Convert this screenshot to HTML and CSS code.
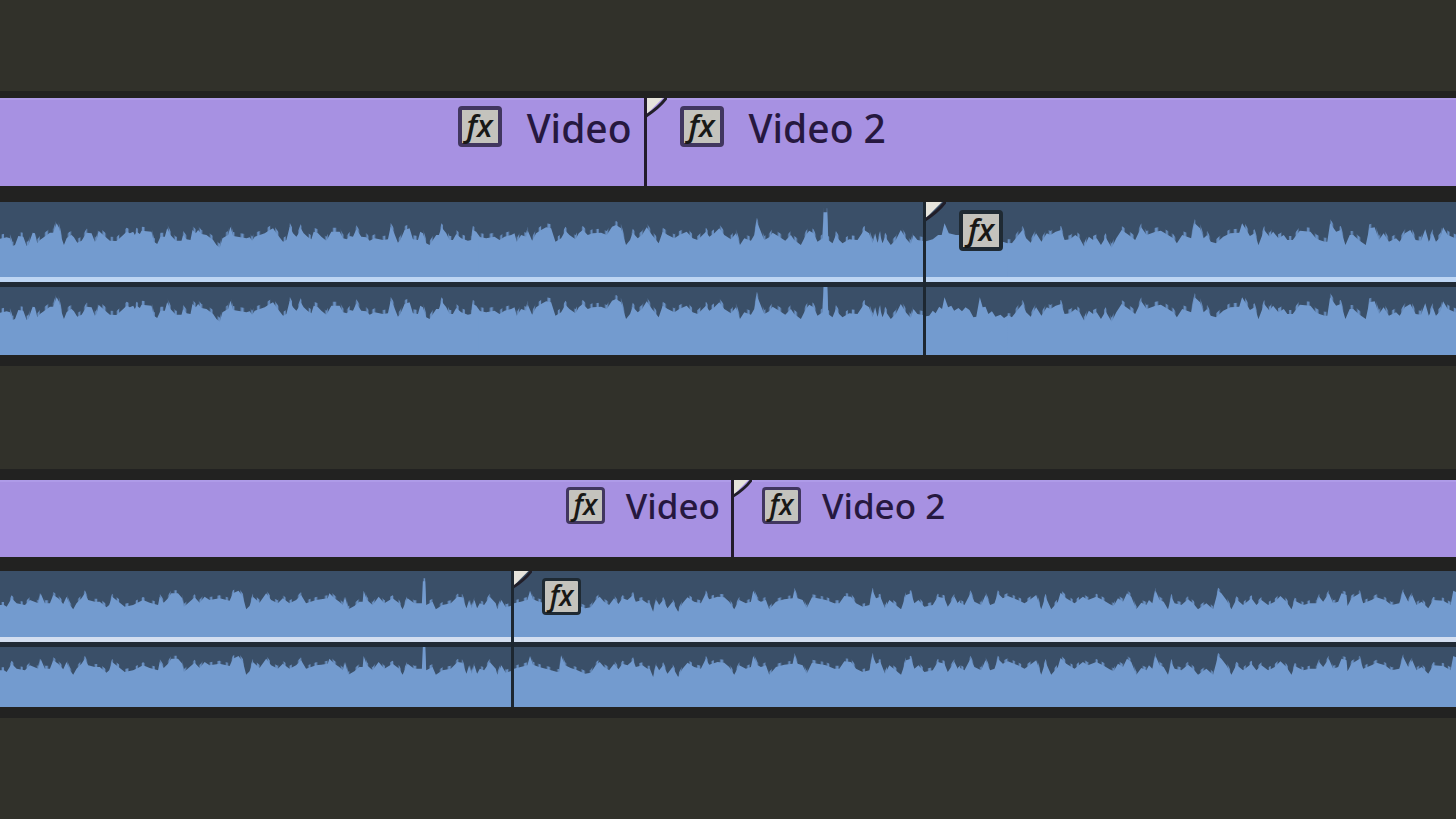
FILE: index.html
```html
<!DOCTYPE html>
<html lang="en">
<head>
<meta charset="utf-8">
<meta name="viewport" content="width=device-width, initial-scale=1">
<title>Timeline</title>
<link rel="stylesheet" href="styles.css">
</head>
<body>
<svg class="defs" aria-hidden="true">
  <defs>
    <pattern id="teeth" width="173" height="600" patternUnits="userSpaceOnUse">
      <path class="tooth" d="M5 0h7v600h-7zM31 0h9v600h-9zM62 0h6v600h-6zM80 0h8v600h-8zM112 0h7v600h-7zM135 0h9v600h-9zM160 0h6v600h-6z"/>
    </pattern>
    <g id="wave-a">
      <path d="M-20,400L-20,180 20,172 30,175 38,198 45,195 55,168 70,170 80,198 85,195 98,158 105,160 112,190 120,180 150,158 160,158 170,130 178,145 185,175 192,195 200,175 208,168 215,165 222,172 232,188 245,182 260,158 275,160 285,185 290,180 296,152 310,165 330,182 350,183 370,165 380,155 390,160 400,155 405,165 410,155 420,162 425,152 455,155 462,185 472,192 482,170 495,170 502,145 512,165 528,182 545,182 550,165 560,178 572,180 578,150 588,160 595,150 605,162 620,165 640,180 650,195 660,203 668,175 685,165 692,140 700,168 740,175 750,172 757,182 765,170 780,165 795,160 810,150 820,145 830,160 850,185 860,180 870,140 880,160 890,170 897,160 903,145 912,160 925,172 935,178 942,155 955,160 965,170 980,182 995,155 1020,155 1030,175 1042,178 1050,168 1060,170 1070,148 1085,170 1100,172 1110,182 1125,175 1150,180 1165,178 1173,140 1182,155 1195,188 1202,180 1215,150 1230,145 1240,178 1255,180 1262,155 1270,160 1280,190 1290,195 1310,165 1318,165 1326,142 1340,160 1350,180 1360,180 1370,162 1385,175 1405,182 1415,180 1420,150 1430,155 1442,172 1442,400Z"/>
      <path transform="translate(1440)" d="M-4,400L-4,170 20,175 45,170 60,180 75,170 95,165 105,160 112,185 125,165 140,170 145,152 158,182 170,160 185,150 200,142 215,145 228,185 245,175 258,152 270,165 288,178 298,160 310,150 325,165 340,160 365,158 382,165 398,140 410,135 425,145 440,195 452,180 460,158 475,175 488,165 502,142 518,165 538,190 550,155 565,165 585,175 600,165 622,155 640,175 655,180 670,165 680,155 690,170 705,160 720,145 735,165 755,178 770,160 782,195 795,175 815,182 825,165 833,125 843,150 855,180 870,172 880,158 900,170 918,182 935,165 945,180 965,195 980,165 990,152 1003,160 1015,185 1030,175 1033,97 1044,97 1047,180 1060,190 1070,165 1080,180 1090,190 1110,178 1135,180 1155,150 1170,160 1180,190 1188,160 1195,188 1203,165 1210,190 1218,170 1235,195 1250,180 1265,150 1280,175 1295,192 1303,165 1315,180 1346,185 1346,400Z"/>
    </g>
    <path id="wave-b-start" d="M60,400L60,190 100,178 115,165 125,165 133,130 145,160 165,165 185,165 215,190 222,188 232,170 260,175 280,180 310,190 322,190 322,400Z"/>
    <path id="wave-b-start-low" d="M60,400L60,190 90,185 100,170 108,178 118,158 126,165 133,130 143,160 152,155 160,170 172,162 182,172 192,160 203,168 214,190 222,188 232,130 240,160 248,158 256,180 266,172 276,188 290,182 300,192 312,184 322,190 322,400Z"/>
    <path id="wave-b" d="M308,400L310,190 322,190 340,165 352,150 362,175 375,188 390,160 405,185 420,160 430,165 445,155 460,150 470,180 485,178 500,165 512,175 525,200 538,170 550,180 560,175 572,195 585,172 602,203 615,175 630,150 650,165 668,180 685,142 700,165 725,155 740,152 760,165 775,175 785,190 800,165 825,175 835,130 850,145 860,175 870,165 880,185 895,190 915,170 935,160 960,158 968,130 980,150 990,168 1003,160 1014,195 1030,150 1045,170 1055,155 1070,175 1085,165 1095,180 1110,180 1130,152 1160,155 1175,175 1185,180 1200,185 1207,185 1215,130 1232,155 1245,150 1258,195 1270,165 1280,165 1295,180 1315,195 1325,145 1340,142 1352,180 1365,160 1380,185 1400,175 1410,185 1425,160 1440,150 1455,180 1470,182 1482,148 1492,185 1503,160 1512,185 1525,170 1532,142 1545,165 1588,185 1588,400Z"/>
    <path id="wave-c" d="M-20,400L-20,165 12,165 20,170 35,145 50,160 75,165 90,150 115,160 122,130 135,160 150,160 160,135 175,145 190,162 200,140 210,165 220,178 230,160 245,145 255,130 265,150 285,155 300,155 320,172 328,165 337,140 360,158 375,170 400,165 410,160 430,150 450,158 475,165 480,140 492,158 505,145 515,130 535,130 548,145 553,170 570,155 585,142 600,158 615,140 630,150 660,145 690,152 700,130 717,122 730,140 740,178 750,168 760,140 780,158 800,130 815,150 835,160 850,145 870,160 890,150 905,135 920,160 950,150 965,148 985,145 990,130 1005,145 1020,155 1030,165 1037,140 1047,178 1065,168 1080,155 1090,155 1093,122 1103,150 1120,165 1138,140 1155,160 1180,145 1200,160 1210,178 1225,145 1245,160 1268,160 1271,94 1278,94 1281,165 1300,155 1310,178 1330,165 1355,160 1375,140 1390,142 1402,175 1410,150 1418,175 1426,150 1434,175 1442,160 1455,165 1472,140 1490,160 1495,178 1507,150 1520,172 1560,160 1560,400Z"/>
    <g id="wave-d">
      <path d="M85,400L85,165 125,155 145,150 153,122 162,148 180,155 200,160 235,170 240,170 246,120 258,150 275,158 295,165 318,175 335,172 350,150 362,140 375,155 390,165 405,145 418,162 430,145 445,150 462,135 470,155 490,150 505,160 512,160 522,185 532,150 540,165 552,150 565,175 580,155 597,185 610,160 625,142 645,155 665,160 680,130 690,148 715,140 735,142 750,155 765,178 780,150 800,160 815,155 822,122 835,150 845,155 860,150 870,178 890,155 915,148 940,145 945,122 955,145 970,150 982,175 998,142 1015,145 1040,150 1065,160 1080,160 1095,138 1115,140 1130,160 1150,170 1170,165 1180,122 1190,145 1203,140 1217,175 1230,150 1265,178 1280,135 1295,130 1305,160 1317,150 1335,170 1360,165 1375,140 1395,145 1405,170 1425,140 1435,160 1442,150 1442,400Z"/>
      <path transform="translate(1440)" d="M-4,400L-4,155 15,165 33,130 45,155 65,165 78,135 92,165 105,160 115,130 130,145 145,138 175,150 195,160 210,150 230,135 245,178 258,140 275,178 295,155 303,128 320,145 345,160 370,140 385,150 410,140 430,150 450,162 462,168 475,145 490,155 502,130 515,140 530,178 545,158 560,165 568,150 578,160 588,122 600,150 612,155 625,178 635,140 645,160 665,165 685,148 700,160 715,178 740,160 760,178 775,122 785,130 800,150 815,178 830,148 850,165 875,145 890,165 905,150 925,165 945,155 962,138 980,155 995,178 1005,152 1030,165 1050,160 1070,160 1078,140 1090,155 1107,130 1120,160 1135,155 1145,130 1160,135 1163,168 1175,145 1200,130 1210,160 1235,150 1250,142 1275,150 1295,165 1318,160 1330,125 1345,155 1357,135 1370,165 1385,155 1405,175 1420,150 1450,152 1472,165 1480,122 1508,135 1508,400Z"/>
    </g>
    <g id="fold">
      <path class="fold-paper" d="M0 0H16L0 16Z"/>
      <path class="fold-line" d="M20 -1Q13 9 -1 18"/>
    </g>
  </defs>
</svg>
<main class="timeline">
  <section class="sequence sequence-large" aria-label="Sequence 1">
    <div class="track video-track">
      <article class="clip video-clip clip-out">
        <button class="fx" type="button">fx</button>
        <span class="clip-name">Video</span>
      </article>
      <article class="clip video-clip clip-in">
        <svg class="fold" viewBox="0 0 20 20" aria-hidden="true"><use href="#fold"/></svg>
        <button class="fx" type="button">fx</button>
        <span class="clip-name">Video 2</span>
      </article>
    </div>
    <div class="track audio-track">
      <article class="clip audio-clip clip-out">
        <svg class="channel channel-left" viewBox="0 66 2772 225" preserveAspectRatio="none" aria-hidden="true"><use class="ridge" y="-12" href="#wave-a"/><use href="#wave-a"/></svg>
        <svg class="channel channel-right" viewBox="0 99 2772 204" preserveAspectRatio="none" aria-hidden="true"><use class="ridge" y="-12" href="#wave-a"/><use href="#wave-a"/></svg>
      </article>
      <article class="clip audio-clip clip-in">
        <svg class="channel channel-left" viewBox="81 66 1487 225" preserveAspectRatio="none" aria-hidden="true"><use class="ridge" y="-12" href="#wave-b"/><use href="#wave-b-start"/><use href="#wave-b"/></svg>
        <svg class="channel channel-right" viewBox="81 99 1487 204" preserveAspectRatio="none" aria-hidden="true"><use class="ridge" y="-12" href="#wave-b"/><use href="#wave-b-start-low"/><use href="#wave-b"/></svg>
        <svg class="fold" viewBox="0 0 20 20" aria-hidden="true"><use href="#fold"/></svg>
        <button class="fx" type="button">fx</button>
      </article>
    </div>
  </section>
  <section class="sequence sequence-small" aria-label="Sequence 2">
    <div class="track video-track">
      <article class="clip video-clip clip-out">
        <button class="fx" type="button">fx</button>
        <span class="clip-name">Video</span>
      </article>
      <article class="clip video-clip clip-in">
        <svg class="fold" viewBox="0 0 20 20" aria-hidden="true"><use href="#fold"/></svg>
        <button class="fx" type="button">fx</button>
        <span class="clip-name">Video 2</span>
      </article>
    </div>
    <div class="track audio-track">
      <article class="clip audio-clip clip-out">
        <svg class="channel channel-left" viewBox="0 63 1536 198" preserveAspectRatio="none" aria-hidden="true"><use class="ridge" y="-9" href="#wave-c"/><use href="#wave-c"/></svg>
        <svg class="channel channel-right" viewBox="0 95 1536 180" preserveAspectRatio="none" aria-hidden="true"><use class="ridge" y="-9" href="#wave-c"/><use href="#wave-c"/></svg>
      </article>
      <article class="clip audio-clip clip-in">
        <svg class="channel channel-left" viewBox="105 63 2823 198" preserveAspectRatio="none" aria-hidden="true"><use class="ridge" y="-9" href="#wave-d"/><use href="#wave-d"/></svg>
        <svg class="channel channel-right" viewBox="105 95 2823 180" preserveAspectRatio="none" aria-hidden="true"><use class="ridge" y="-9" href="#wave-d"/><use href="#wave-d"/></svg>
        <svg class="fold" viewBox="0 0 20 20" aria-hidden="true"><use href="#fold"/></svg>
        <button class="fx" type="button">fx</button>
      </article>
    </div>
  </section>
</main>
</body>
</html>
```
FILE: styles.css
```css
* { box-sizing: border-box; }

body {
  margin: 0;
  min-height: 100vh;
  background: #31312a;
  font-family: "Noto Sans", "Open Sans", sans-serif;
}

.defs {
  display: block;
  width: 0;
  height: 0;
}

.timeline {
  display: flex;
  flex-direction: column;
  gap: 103px;
  padding: 91px 0 100px;
}

.sequence {
  display: flex;
  flex-direction: column;
  background: #222221;
}

.sequence-large {
  --video-height: 88px;
  --left-height: 75px;
  --right-height: 68px;
  --line-height: 5px;
  --inset: 33px;
  --inset-top: 8px;
  --fx-width: 44px;
  --fx-height: 41px;
  --fx-size: 31px;
  --name-size: 39px;
  --name-gap: 25px;
  --name-end: 12px;
  --fold-size: 20px;
  --video-cut: 44.2%;
  --audio-cut: 63.4%;
  gap: 16px;
  padding: 7px 0 11px;
}

.sequence-small {
  --video-height: 77px;
  --left-height: 66px;
  --right-height: 60px;
  --line-height: 5px;
  --inset: 28px;
  --inset-top: 7px;
  --fx-width: 39px;
  --fx-height: 37px;
  --fx-size: 28px;
  --name-size: 35px;
  --name-gap: 21px;
  --name-end: 11px;
  --fold-size: 18px;
  --video-cut: 50.2%;
  --audio-cut: 35.1%;
  gap: 14px;
  padding: 11px 0;
}

.track { display: flex; }

.clip {
  position: relative;
  min-width: 0;
}

.clip-out { flex: none; }

.clip-in {
  flex: 1;
  border-left: 3px solid #231b2c;
}

.video-track .clip-out { width: var(--video-cut); }
.audio-track .clip-out { width: var(--audio-cut); }

.video-clip {
  display: flex;
  align-items: flex-start;
  gap: var(--name-gap);
  height: var(--video-height);
  padding: var(--inset-top) var(--name-end) 0 var(--inset);
  background: #a791e2;
  box-shadow: inset 0 2px #ae9be8;
}

.video-clip.clip-out { justify-content: flex-end; }

.clip-name {
  color: #26183f;
  font-size: var(--name-size);
  font-weight: 500;
  line-height: 44px;
  white-space: nowrap;
}

.sequence-small .clip-name { line-height: 38px; }

.fx {
  flex: none;
  width: var(--fx-width);
  height: var(--fx-height);
  padding: 0 0 4px;
  border: 4px solid #41365f;
  border-radius: 4px;
  background: #c4c3bd;
  color: #181816;
  font-family: "Open Sans", "Noto Sans", sans-serif;
  font-size: var(--fx-size);
  font-style: italic;
  font-weight: 600;
  line-height: 24px;
  text-align: center;
}

.sequence-small .fx {
  border-width: 3px;
}

.audio-clip {
  display: flex;
  flex-direction: column;
  background: #3a4f68;
}

.audio-clip.clip-in { border-left-color: #1d2731; }

.audio-clip .fx {
  position: absolute;
  top: var(--inset-top);
  left: var(--inset);
  border-color: #1f2a33;
}

.channel {
  display: block;
  width: 100%;
  fill: #739bcf;
}

.ridge { fill: url(#teeth); }

.tooth { fill: #6990c3; }

.channel-left {
  height: calc(var(--left-height) + var(--line-height));
  border-bottom: var(--line-height) solid #bdd5f3;
}

.channel-right {
  height: calc(var(--right-height) + var(--line-height));
  border-top: var(--line-height) solid #202a35;
}

.sequence-small .channel-left { border-bottom-color: #d3def0; }

.fold {
  position: absolute;
  top: 0;
  left: 0;
  width: var(--fold-size);
  height: var(--fold-size);
}

.fold-paper { fill: #e6e4dc; }

.fold-line {
  fill: none;
  stroke: #211e28;
  stroke-width: 3;
}
```
